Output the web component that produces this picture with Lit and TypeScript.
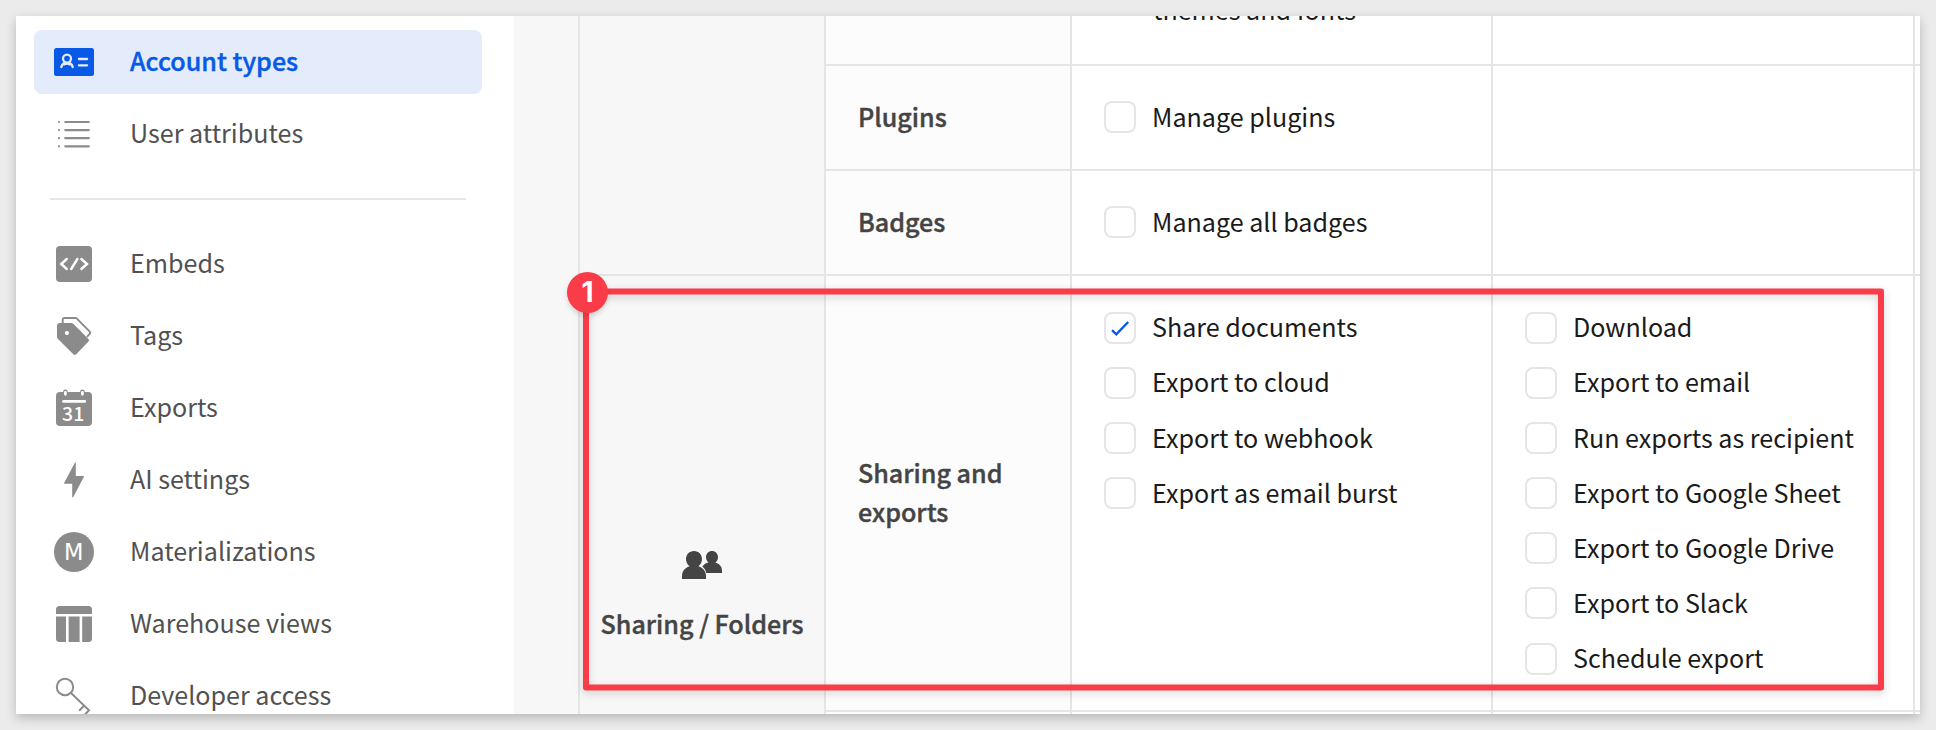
import { LitElement, html, svg, css, TemplateResult } from "lit";
import { customElement, property } from "lit/decorators.js";

const icons: Record<string, TemplateResult> = {
  account: svg`<rect y="6" width="40" height="28" rx="2.5" fill="currentColor"/>
    <g fill="none" stroke="#e4ebfb" stroke-width="2.3" stroke-linecap="round"><circle cx="13" cy="16.600" r="4"/>
    <path d="M7.300 25c.5-2.200 2.100-3.800 3.500-4.600M18.700 25c-.5-2.200-2.100-3.800-3.500-4.600M10.500 22.300q2.500-1.600 5 0"/>
    <path d="M24.900 17h8.200M24.900 23.300h8.200"/></g>`,
  list: svg`<g stroke="currentColor" stroke-width="2.200" stroke-linecap="round"><path d="M11.300 8h23.500M11.300 16.100h23.500M11.300 24.200h23.500M11.300 32.300h23.500M5 8h.01M5 16.100h.01M5 24.200h.01M5 32.300h.01"/></g>`,
  embed: svg`<rect x="2" y="2" width="36" height="36" rx="4" fill="currentColor"/>
    <path d="M12.800 15 7.200 20l5.600 5M27.400 15l5.600 5-5.600 5M23.400 15l-6.200 10" fill="none" stroke="#fff" stroke-width="2.400" stroke-linecap="round"/>`,
  tag: svg`<path d="M3 10a3 3 0 0 1 3-3h11.500a2 2 0 0 1 1.500.6L34.500 23a2 2 0 0 1 0 2.600L22.200 38.300a2 2 0 0 1-2.900 0L4 23a3 3 0 0 1-1-2.200Z" fill="currentColor"/>
    <circle cx="12.900" cy="17" r="2.100" fill="#fff"/>
    <path d="M8.700 7V4a2 2 0 0 1 2-2H21.500a2 2 0 0 1 1.400.6L35.500 15.300a2 2 0 0 1 0 2.800l-2.600 2.800" fill="none" stroke="currentColor" stroke-width="1.900"/>`,
  calendar: svg`<rect x="2" y="4" width="36" height="34" rx="4" fill="currentColor"/>
    <path d="M11.400 3.800v2.400M28.400 3.800v2.400" stroke="currentColor" stroke-width="4.600" stroke-linecap="round"/>
    <path d="M11.400 4.300v2M28.400 4.300v2" stroke="#fff" stroke-width="2.800" stroke-linecap="round"/>
    <path d="M9.400 13.400h21.400" stroke="#fff" stroke-width="2.600" stroke-linecap="round"/>
    <text x="19.200" y="32.600" text-anchor="middle" class="digits">31</text>`,
  bolt: svg`<path d="M21 2.400q.8-.3.8.6V16h7.600q.8 0 .5.8L19.300 37q-.9 1.200-1.100-.3V23.700H10.500q-.7 0-.4-.8Z" fill="currentColor"/>`,
  materialize: svg`<circle cx="20" cy="20" r="20" fill="currentColor"/><text x="19.800" y="28" text-anchor="middle" class="letter">M</text>`,
  warehouse: svg`<path d="M2 10V5.500A3.500 3.500 0 0 1 5.500 2h29A3.500 3.500 0 0 1 38 5.500V10ZM2 12.600h10V38H5.500A3.500 3.500 0 0 1 2 34.500ZM14.600 12.600h11V38h-11ZM28.200 12.600H38V34.500A3.500 3.500 0 0 1 34.500 38H28.200Z" fill="currentColor"/>`,
  key: svg`<g fill="none" stroke="currentColor" stroke-width="2"><circle cx="11" cy="11" r="8.200"/><path d="M17 17 35 34.300 30.500 39M30 29.800l-4.800 4.900"/></g>`,
};

@customElement("nav-item")
class NavItem extends LitElement {
  @property() icon = "";
  @property() label = "";
  @property({ type: Boolean, reflect: true }) active = false;
  static styles = css`
    :host { display: flex; align-items: center; height: 64px; margin-bottom: 8px; padding-left: 20px; gap: 36px;
      border-radius: 8px; color: #8b8b8b; flex: none; box-sizing: border-box; }
    :host([active]) { background: #e4ebfb; color: #0759e6; }
    svg { width: 40px; height: 40px; flex: none; }
    .label { color: #515151; white-space: nowrap; font-size: 25.1px; line-height: 36px; padding-bottom: 5px; }
    :host([active]) .label { color: #0759e6; font-weight: 500; -webkit-text-stroke: .4px #0759e6; }
    .digits { font: 500 19.500px "Noto Sans CJK SC", sans-serif; fill: #fff; }
    .letter { font: 400 22.500px "DejaVu Sans", sans-serif; fill: #fff; }
  `;
  render() {
    return html`<svg viewBox="0 0 40 40">${icons[this.icon]}</svg><span class="label">${this.label}</span>`;
  }
}

@customElement("check-option")
class CheckOption extends LitElement {
  @property() label = "";
  @property({ type: Boolean }) checked = false;
  static styles = css`
    :host { display: flex; gap: 16px; height: 32px; align-items: flex-start; }
    .box { width: 32px; height: 32px; box-sizing: border-box; border: 2px solid #e5e5e5; border-radius: 8px; flex: none; background: #fff; }
    svg { display: block; width: 28px; height: 28px; }
    .text { white-space: nowrap; font-size: 25.1px; line-height: 28.700px; margin-top: var(--label-shift, 0); color: #1a1a1a; }
  `;
  render() {
    return html`<span class="box">${this.checked
        ? html`<svg viewBox="2 2 28 28"><path d="M8 18.200 12.300 22.300 24.200 10" fill="none" stroke="#0759e6" stroke-width="2.300"/></svg>`
        : ""}</span><span class="text">${this.label}</span>`;
  }
}

@customElement("app-root")
class AppRoot extends LitElement {
  static styles = css`
    :host { display: block; width: 1936px; height: 730px; box-sizing: border-box; padding: 16px; background: #ebebeb;
      font-family: "Noto Sans CJK SC", "Source Sans Pro", sans-serif; overflow: hidden; position: relative; }
    .panel { display: flex; width: 1904px; height: 698px; background: #fff; box-shadow: 0 4px 10px rgba(0, 0, 0, .22); }
    .clip { display: flex; width: 1904px; height: 698px; overflow: hidden; }
    .nav { width: 448px; padding: 14px 32px 0 18px; flex: none; display: flex; flex-direction: column; }
    .divider { height: 2px; margin: 24px 16px 32px; background: #e5e5e5; flex: none; }
    .gutter { width: 64px; background: #f7f7f7; flex: none; }
    .table { display: grid; grid-template-columns: 246px 246px 421px 422px 7px; grid-template-rows: 48px 105px 105px 436px 4px; flex: none; }
    .cell { border-left: 2px solid #e5e5e5; border-top: 2px solid #e5e5e5; box-sizing: border-box; min-width: 0; min-height: 0; }
    .first { border-top: 0; }
    .group { background: #f7f7f7; grid-row: span 3; color: #444; }
    .folder { grid-row: span 2; display: flex; flex-direction: column; align-items: center; padding-top: 275px; gap: 25px; }
    .folder svg { width: 40px; height: 28px; }
    .heading { background: #fcfcfc; display: flex; align-items: center; padding: 0 30px 2px 32px; }
    .bold { font-size: 25.1px; line-height: 39px; font-weight: 500; color: #444; -webkit-text-stroke: .4px #444; }
    .nowrap { white-space: nowrap; }
    .options { padding: 35.700px 0 0 32px; display: flex; flex-direction: column; gap: 23.170px; --label-shift: .5px; }
    .single { padding-top: 35.400px; --label-shift: 1px; }
    .wrap { padding: 0 0 35px 81px; display: flex; align-items: flex-end; font-size: 25.100px; line-height: 39px; color: #1a1a1a; overflow: hidden; }
    .frame { position: absolute; left: 0; top: 0; width: 1936px; height: 730px; filter: drop-shadow(0 3px 4px rgba(0, 0, 0, .16)); }
    .badge { position: absolute; left: 567px; top: 272px; width: 41px; height: 41px; border-radius: 50%; background: #f93c48; color: #fff;
      font: 700 28px/41px Inter, sans-serif; text-align: center; box-shadow: 0 3px 5px rgba(0, 0, 0, .14); }
  `;

  option(label: string, checked = false) {
    return html`<check-option .label=${label} .checked=${checked}></check-option>`;
  }

  item(icon: string, label: string, active = false) {
    return html`<nav-item .icon=${icon} .label=${label} .active=${active}></nav-item>`;
  }

  render() {
    return html`
      <div class="panel"><div class="clip">
        <nav class="nav">
          ${this.item("account", "Account types", true)}
          ${this.item("list", "User attributes")}
          <div class="divider"></div>
          ${this.item("embed", "Embeds")}
          ${this.item("tag", "Tags")}
          ${this.item("calendar", "Exports")}
          ${this.item("bolt", "AI settings")}
          ${this.item("materialize", "Materializations")}
          ${this.item("warehouse", "Warehouse views")}
          ${this.item("key", "Developer access")}
        </nav>
        <div class="gutter"></div>
        <div class="table">
          <div class="cell first group"></div>
          <div class="cell first heading"></div>
          <div class="cell first wrap">themes and fonts</div>
          <div class="cell first"></div>
          <div class="cell first"></div>

          <div class="cell heading bold">Plugins</div>
          <div class="cell options single">${this.option("Manage plugins")}</div>
          <div class="cell"></div>
          <div class="cell"></div>

          <div class="cell heading bold">Badges</div>
          <div class="cell options single">${this.option("Manage all badges")}</div>
          <div class="cell"></div>
          <div class="cell"></div>

          <div class="cell group folder">
            <svg viewBox="0 0 40 28" fill="#444"><path d="M12 0c4.600 0 8 3.600 8 8 0 3-1.500 5.800-3.700 7.200 4.600 1.300 7.700 5 7.700 9.600V28H0v-3.200c0-4.600 3.100-8.300 7.700-9.600C5.500 13.800 4 11 4 8c0-4.400 3.400-8 8-8Z"/><path d="M30 0c3.400 0 6 2.700 6 6 0 2.300-1 4.300-2.700 5.400C37.300 12.500 40 15.600 40 19.500V22H24.300c-.6-2.600-1.900-4.900-4-6.500 1.300-2.100 3.500-3.500 6.300-4.100C25 10.300 24 8.300 24 6c0-3.300 2.600-6 6-6Z"/></svg>
            <span class="bold nowrap">Sharing / Folders</span>
          </div>
          <div class="cell heading bold">Sharing and exports</div>
          <div class="cell options">
            ${this.option("Share documents", true)}
            ${["Export to cloud", "Export to webhook", "Export as email burst"].map((l) => this.option(l))}
          </div>
          <div class="cell options">
            ${["Download", "Export to email", "Run exports as recipient", "Export to Google Sheet", "Export to Google Drive", "Export to Slack", "Schedule export"].map((l) => this.option(l))}
          </div>
          <div class="cell"></div>

          <div class="cell heading"></div>
          <div class="cell"></div>
          <div class="cell"></div>
          <div class="cell"></div>
        </div>
      </div></div>
      <svg class="frame" viewBox="0 0 1936 730"><rect x="586" y="291.500" width="1295" height="396" fill="none" stroke="#f93c48" stroke-width="6" stroke-linejoin="round"/></svg>
      <div class="badge">1</div>
    `;
  }
}
